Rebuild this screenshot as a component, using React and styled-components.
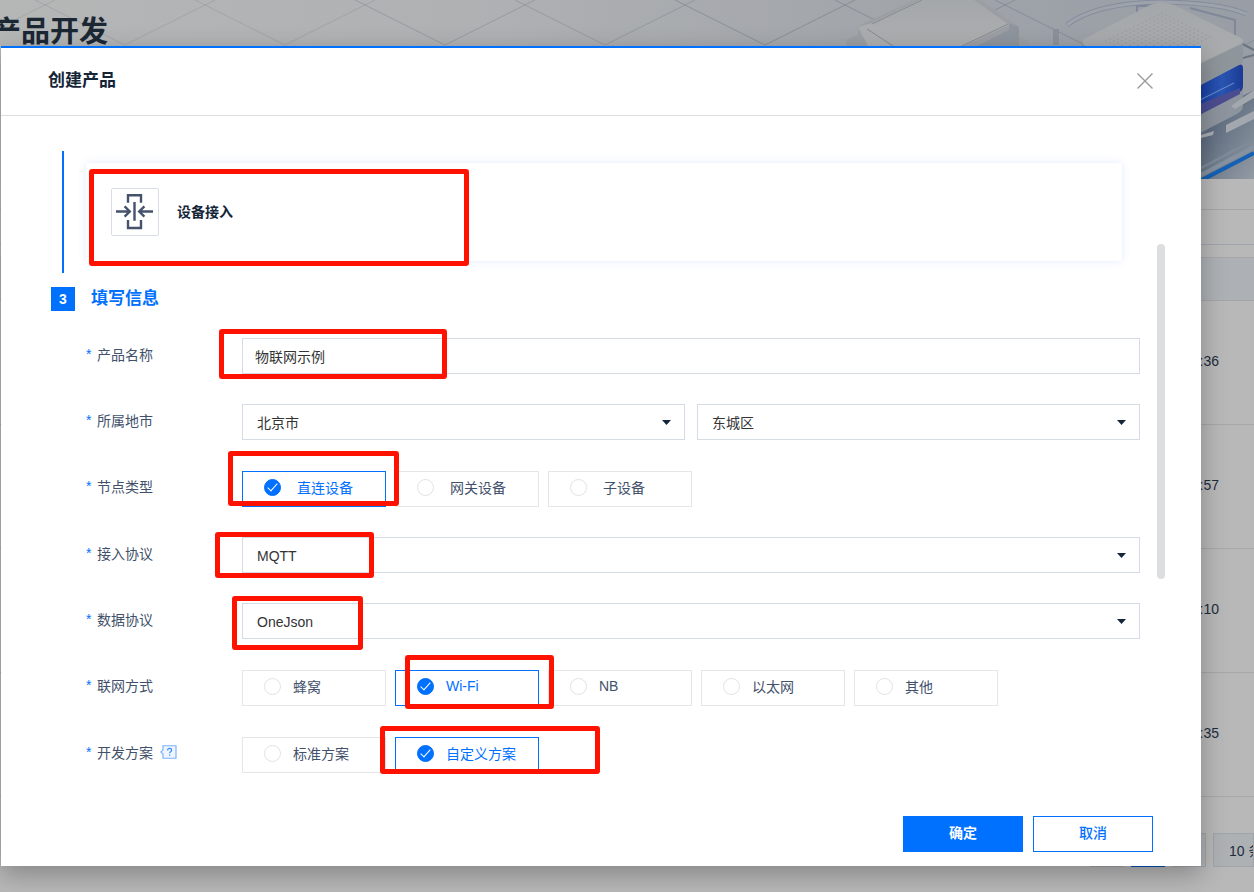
import React, { useState } from "react";
import styled, { createGlobalStyle, css } from "styled-components";

const blue = "#0070ff";

const GlobalStyle = createGlobalStyle`
  *, *::before, *::after { box-sizing: border-box; }
  body {
    margin: 0;
    background: #b8b8b8;
    color: #333;
    font-family: "Liberation Sans", "Noto Sans CJK SC", sans-serif;
    font-size: 14px;
  }
  button, input, select { font: inherit; }
`;

const Page = styled.div`
  position: relative;
  min-height: 100vh;
  overflow: hidden;
  background: #b8b8b8;
`;

/* ---------- page behind the dialog ---------- */

const Banner = styled.header`
  position: relative;
  height: 179px;
  padding-top: 11px;
  overflow: hidden;
  background: linear-gradient(90deg, #b5b6b6, #a4a8ad);
`;

const BannerArt = styled.svg`
  position: absolute;
  top: 0;
  right: 0;
  width: 1254px;
  height: 179px;
`;

const PageTitle = styled.h1`
  position: relative;
  margin: 0 0 0 -8px;
  color: #1b2733;
  font-size: 29px;
  line-height: 42px;
`;

const Strip = styled.div`
  height: ${(p) => p.$height}px;
  border-bottom: 1px solid ${(p) => p.$line};
`;

const DeviceTable = styled.table`
  width: 100%;
  margin-top: 12px;
  border-collapse: separate;
  border-spacing: 0;
`;

const HeadCell = styled.th`
  height: 44px;
  padding: 0;
  background: #adb1b5;
  border-top: 1px solid #a4a6a9;
  border-bottom: 1px solid #a4a6a9;
`;

const TimeCell = styled.td`
  height: 124px;
  padding: 0 35px 3px 0;
  border-bottom: 1px solid #a5a7a9;
  color: #1c2c3b;
  text-align: right;
`;

const Pager = styled.nav`
  display: flex;
  justify-content: flex-end;
  gap: 7px;
  padding: 36px 0 25px;
`;

const PagerButton = styled.button`
  width: ${(p) => p.$width || 34}px;
  height: 34px;
  padding: 0 0 0 15px;
  overflow: hidden;
  border: 1px solid ${(p) => (p.$active ? "#0050b8" : "#a0a5ab")};
  background: ${(p) => (p.$active ? "#0050b8" : "#aeb1b4")};
  color: #1c2c3b;
  text-align: left;
  white-space: nowrap;
`;

/* ---------- dialog ---------- */

const Dialog = styled.section`
  position: absolute;
  top: 46px;
  left: 1px;
  right: 53px;
  background: #fff;
  border-top: 2px solid ${blue};
  box-shadow: 0 8px 24px rgba(0, 0, 0, 0.28);
`;

const DialogHeader = styled.div`
  display: flex;
  align-items: center;
  justify-content: space-between;
  height: 68px;
  padding: 0 48px 2px 47px;
  border-bottom: 1px solid #dcdee2;
`;

const DialogTitle = styled.h2`
  margin: 0;
  color: #152538;
  font-size: 17px;
  line-height: 24px;
`;

const CloseButton = styled.button`
  display: flex;
  padding: 0;
  border: 0;
  background: none;
  color: #999;
`;

const DialogBody = styled.div`
  display: flex;
  padding: 35px 36px 0 50px;
`;

const Content = styled.div`
  flex: 1;
  min-width: 0;
  padding-right: 17px;
`;

const ScrollTrack = styled.div`
  width: 8px;
  padding-top: 93px;
`;

const ScrollThumb = styled.div`
  height: 335px;
  border-radius: 4px;
  background: #dcdee0;
`;

const StepRail = styled.div`
  margin-left: 11px;
  padding: 12px 18px 12px 22px;
  border-left: 2px solid ${blue};
`;

const ServiceCard = styled.div`
  display: flex;
  align-items: center;
  gap: 18px;
  height: 98px;
  padding: 0 25px;
  background: #fff;
  box-shadow: 0 0 8px rgba(64, 112, 255, 0.14);
`;

const ServiceIcon = styled.span`
  display: flex;
  width: 48px;
  height: 48px;
  border: 1px solid #d8dde6;
  border-radius: 2px;
  color: #44536b;
`;

const ServiceName = styled.strong`
  padding-bottom: 3px;
  color: #152538;
`;

const StepHeading = styled.div`
  display: flex;
  align-items: center;
  gap: 16px;
  margin: 14px 0 27px;
`;

const StepNumber = styled.span`
  width: 24px;
  height: 24px;
  background: ${blue};
  color: #fff;
  font-weight: 700;
  line-height: 24px;
  text-align: center;
`;

const StepTitle = styled.h3`
  margin: 0;
  color: ${blue};
  font-size: 17px;
  line-height: 24px;
`;

const Form = styled.form`
  display: grid;
  gap: 30px;
  margin: 0 0 0 35px;
`;

const FormRow = styled.div`
  display: grid;
  grid-template-columns: 156px 1fr;
`;

const labelStyle = css`
  display: flex;
  align-items: center;
  height: 32px;
  color: #42516b;
  white-space: nowrap;
  &::before {
    content: "*";
    width: 11px;
    color: ${blue};
    line-height: 16px;
  }
`;

const FieldLabel = styled.label`
  ${labelStyle}
`;

const GroupLabel = styled.span`
  ${labelStyle}
`;

const fieldBox = css`
  width: 100%;
  height: 36px;
  border: 1px solid #d6dce5;
  border-radius: 0;
  outline: 0;
  background: #fff;
  color: #333;
`;

const TextInput = styled.input`
  ${fieldBox}
  padding: 0 12px;
`;

const SelectPair = styled.div`
  display: grid;
  grid-template-columns: 1fr 1fr;
  gap: 12px;
`;

const SelectWrap = styled.div`
  position: relative;
`;

const Select = styled.select`
  ${fieldBox}
  appearance: none;
  padding: 2px 32px 0 14px;
`;

const Caret = styled.svg`
  position: absolute;
  top: 16px;
  right: 14px;
  pointer-events: none;
`;

const OptionGroup = styled.div`
  display: flex;
  gap: 9px;
  padding-top: 1px;
`;

const Option = styled.label`
  display: flex;
  align-items: center;
  gap: ${(p) => p.$gap}px;
  min-width: 144px;
  height: 36px;
  padding: 0 21px 4px;
  border: 1px solid ${(p) => (p.$checked ? blue : "#e4e6e9")};
  color: ${(p) => (p.$checked ? blue : "#42516b")};
  white-space: nowrap;
`;

const Radio = styled.input`
  display: grid;
  place-items: center;
  appearance: none;
  width: 17px;
  height: 17px;
  margin: 0;
  border: 1px solid #e0e2e5;
  border-radius: 50%;
  background: #fff;
  &:checked {
    border-color: ${blue};
    background: ${blue};
  }
  &:checked::after {
    content: "";
    width: 5px;
    height: 10px;
    margin-bottom: 3px;
    border: solid #fff;
    border-width: 0 1px 1px 0;
    transform: rotate(42deg);
  }
`;

const HelpIcon = styled.svg`
  margin-left: 7px;
`;

const DialogFooter = styled.div`
  display: flex;
  justify-content: flex-end;
  gap: 10px;
  padding: 43px 48px 14px;
`;

const ActionButton = styled.button`
  width: 120px;
  height: 36px;
  padding: 0 0 4px;
  border: 1px solid ${blue};
  background: ${(p) => (p.$primary ? blue : "#fff")};
  color: ${(p) => (p.$primary ? "#fff" : blue)};
  font-weight: ${(p) => (p.$primary ? 700 : 500)};
`;

const Marker = styled.span`
  position: absolute;
  top: ${(p) => p.$top}px;
  left: ${(p) => p.$left}px;
  width: ${(p) => p.$width}px;
  height: ${(p) => p.$height}px;
  border: 5px solid #ff1200;
  border-radius: 3px;
  pointer-events: none;
`;

const markers = [
  [88, 121, 380, 97],
  [218, 281, 228, 50],
  [227, 403, 171, 55],
  [214, 484, 159, 46],
  [231, 548, 131, 54],
  [404, 607, 149, 54],
  [379, 678, 220, 48],
];

function Illustration() {
  const cells = [-115, 45, 205, 365, 525, 685, 845, 1005, 1165];
  return (
    <BannerArt viewBox="0 0 1254 179" aria-hidden="true">
      <defs>
        <linearGradient id="shade" x1="0" y1="0" x2="1" y2="0">
          <stop offset="0" stopColor="#8f959f" stopOpacity="0" />
          <stop offset="1" stopColor="#8f959f" stopOpacity="0.55" />
        </linearGradient>
        <linearGradient id="floor" x1="0" y1="0" x2="1" y2="1">
          <stop offset="0" stopColor="#8b929c" />
          <stop offset="0.35" stopColor="#5f6d80" />
          <stop offset="1" stopColor="#939ba4" />
        </linearGradient>
        <linearGradient id="top" x1="0" y1="0" x2="0" y2="1">
          <stop offset="0" stopColor="#a4a7aa" />
          <stop offset="1" stopColor="#adafb0" />
        </linearGradient>
        <linearGradient id="glow" x1="0" y1="0" x2="1" y2="0">
          <stop offset="0" stopColor="#12339b" />
          <stop offset="0.6" stopColor="#2a56b4" />
          <stop offset="1" stopColor="#1b3a94" />
        </linearGradient>
        <pattern id="dots" width="8" height="4" patternUnits="userSpaceOnUse">
          <circle cx="2" cy="1" r="1" fill="#9da1a4" />
          <circle cx="6" cy="3" r="1" fill="#9da1a4" />
        </pattern>
      </defs>
      <rect x="500" width="754" height="179" fill="url(#shade)" />
      {cells.map((x) => (
        <g key={x} stroke="#7d858f" strokeOpacity={x < 300 ? 0.3 : x < 600 ? 0.5 : 0.75}>
          <path d={`M${x - 10} 0L${x + 80} 45L${x + 170} 0`} fill="none" />
        </g>
      ))}
      <path d="M846 46v-6l12-5V26L915 0h66l38 27v9l10 5v5z" fill="#9b9fa4" />
      <path d="M858 27L872 23 919 0h55l35 25-45 21H868z" fill="url(#top)" />
      <path d="M872 24L922 0M1008 24l-46 22M867 29l26 17" stroke="#858b92" fill="none" />
      <path d="M1009 23v7l-32 16h42V27z" fill="#8f959d" />
      <rect x="1053" y="29" width="6" height="16" fill="#8b919a" />
      <path d="M1067 25q28-22 95-23 60 1 84 12" stroke="#858c9c" strokeWidth="5" fill="none" />
      <path d="M1067 25q28-22 95-23 60 1 84 12" stroke="#9ea2aa" strokeWidth="3" fill="none" />
      <path d="M1137 17V6h30M1190 8l45 12v18" stroke="#7f8799" strokeWidth="2" fill="none" />
      <path d="M1195 120L1254 90V179H1195z" fill="url(#floor)" />
      <path d="M1235 40l19 10M1243 58l11-3M1225 115l29-17" stroke="#6b7480" strokeWidth="2" fill="none" />
      <path d="M1190 106L1243 80v25q0 6-6 9l-37 19z" fill="#8d949d" />
      <path d="M1190 90L1238 65q5-2 5 3v18q0 5-5 7l-48 26z" fill="url(#glow)" />
      <path d="M1190 108l50-20v6l-50 26z" fill="#4b4d91" />
      <path d="M1200 100l34-17" stroke="#6d95c8" strokeWidth="1" />
      <path d="M1082 42v4h119v39l38-20q4-2 4-6V40z" fill="#8e959b" />
      <path d="M1084 39L1150 5q12-5 24 0l67 33q4 3 0 6l-40 19-40 20-77-38q-3-3 0-6z" fill="url(#top)" />
      <path d="M1104 41L1162 11 1216 37 1160 66z" fill="url(#dots)" />
      <path d="M1226 125v8l28-14v-8zM1231 106l23-16v8l-19 11z" fill="#a3a8ae" />
      <path d="M1201 135l13-4-1 4-12 3z" fill="#a9aeb4" />
      <path d="M1201 168l53-28" stroke="#7f8b9b" strokeWidth="2" />
      <path d="M1201 175l53-28" stroke="#8792a1" strokeWidth="4" />
      <path d="M1200 181l54-28" stroke="#1360b4" strokeWidth="4" />
    </BannerArt>
  );
}

function SelectField({ id, label, options }) {
  return (
    <SelectWrap>
      <Select id={id} aria-label={label}>
        {options.map((o) => (
          <option key={o}>{o}</option>
        ))}
      </Select>
      <Caret width="9" height="5" viewBox="0 0 9 5" aria-hidden="true">
        <path d="M0 0h9L4.5 5z" fill="#15263a" />
      </Caret>
    </SelectWrap>
  );
}

function RadioField({ name, label, options, initial, gap = 12, help }) {
  const [value, setValue] = useState(initial);
  return (
    <FormRow role="radiogroup" aria-labelledby={`${name}-label`}>
      <GroupLabel id={`${name}-label`}>
        {label}
        {help && (
          <HelpIcon width="17" height="14" viewBox="0 0 17 14" fill="none" aria-hidden="true">
            <path d="M3 .75h13v12.5H3V9L.8 7 3 5z" fill="#eef5ff" stroke="#7db4ff" strokeWidth="1.2" />
            <path d="M7.6 5.4q0-2 2-2t2 1.8q0 1-1 1.6-1 .5-1 1.5M9.6 9.4v1.4" stroke="#3d8eff" strokeWidth="1.2" />
          </HelpIcon>
        )}
      </GroupLabel>
      <OptionGroup>
        {options.map((o) => (
          <Option key={o} $checked={o === value} $gap={gap}>
            <Radio type="radio" name={name} checked={o === value} onChange={() => setValue(o)} />
            {o}
          </Option>
        ))}
      </OptionGroup>
    </FormRow>
  );
}

export default function App() {
  const [name, setName] = useState("物联网示例");
  return (
    <Page>
      <GlobalStyle />
      <Banner>
        <Illustration />
        <PageTitle>产品开发</PageTitle>
      </Banner>
      <Strip $height={31} $line="#a3a5a8" />
      <Strip $height={35} $line="#9fa3aa" />
      <DeviceTable>
        <thead>
          <tr>
            <HeadCell />
          </tr>
        </thead>
        <tbody>
          {[":36", ":57", ":10", ":35"].map((time) => (
            <tr key={time}>
              <TimeCell>{time}</TimeCell>
            </tr>
          ))}
        </tbody>
      </DeviceTable>
      <Pager aria-label="分页">
        <PagerButton aria-label="上一页" />
        <PagerButton aria-label="当前页" $active />
        <PagerButton aria-label="下一页" />
        <PagerButton $width={41}>10 条</PagerButton>
      </Pager>

      <Dialog role="dialog" aria-labelledby="dialog-title">
        <DialogHeader>
          <DialogTitle id="dialog-title">创建产品</DialogTitle>
          <CloseButton type="button" aria-label="关闭">
            <svg width="16" height="16" viewBox="0 0 16 16" stroke="currentColor" strokeWidth="1.4">
              <path d="M.5.5l15 15M15.5.5l-15 15" />
            </svg>
          </CloseButton>
        </DialogHeader>

        <DialogBody>
          <Content>
            <StepRail>
              <ServiceCard>
                <ServiceIcon>
                  <svg width="46" height="46" viewBox="1 1 46 46" fill="none" stroke="currentColor" strokeWidth="2.4" aria-hidden="true">
                    <path d="M17 14.7V7.2h13v7.5M17 32v8h13v-8M23.5 14v18.7" />
                    <path d="M5 23.5h14M13.6 18.3l5.2 5.2-5.2 5.2M42 23.5H28M33.4 18.3l-5.2 5.2 5.2 5.2" />
                  </svg>
                </ServiceIcon>
                <ServiceName>设备接入</ServiceName>
              </ServiceCard>
            </StepRail>

            <StepHeading>
              <StepNumber>3</StepNumber>
              <StepTitle>填写信息</StepTitle>
            </StepHeading>

            <Form id="product-form" onSubmit={(e) => e.preventDefault()}>
              <FormRow>
                <FieldLabel htmlFor="name">产品名称</FieldLabel>
                <TextInput id="name" value={name} onChange={(e) => setName(e.target.value)} />
              </FormRow>
              <FormRow>
                <FieldLabel htmlFor="city">所属地市</FieldLabel>
                <SelectPair>
                  <SelectField id="city" options={["北京市"]} />
                  <SelectField id="district" label="所属区" options={["东城区"]} />
                </SelectPair>
              </FormRow>
              <RadioField name="node" label="节点类型" options={["直连设备", "网关设备", "子设备"]} initial="直连设备" gap={16} />
              <FormRow>
                <FieldLabel htmlFor="access">接入协议</FieldLabel>
                <SelectField id="access" options={["MQTT"]} />
              </FormRow>
              <FormRow>
                <FieldLabel htmlFor="data">数据协议</FieldLabel>
                <SelectField id="data" options={["OneJson"]} />
              </FormRow>
              <RadioField name="network" label="联网方式" options={["蜂窝", "Wi-Fi", "NB", "以太网", "其他"]} initial="Wi-Fi" />
              <RadioField name="plan" label="开发方案" options={["标准方案", "自定义方案"]} initial="自定义方案" help />
            </Form>
          </Content>
          <ScrollTrack>
            <ScrollThumb />
          </ScrollTrack>
        </DialogBody>

        <DialogFooter>
          <ActionButton type="submit" form="product-form" $primary>确定</ActionButton>
          <ActionButton type="button">取消</ActionButton>
        </DialogFooter>

        {markers.map(([left, top, width, height]) => (
          <Marker key={`${left}-${top}`} $left={left} $top={top} $width={width} $height={height} />
        ))}
      </Dialog>
    </Page>
  );
}
